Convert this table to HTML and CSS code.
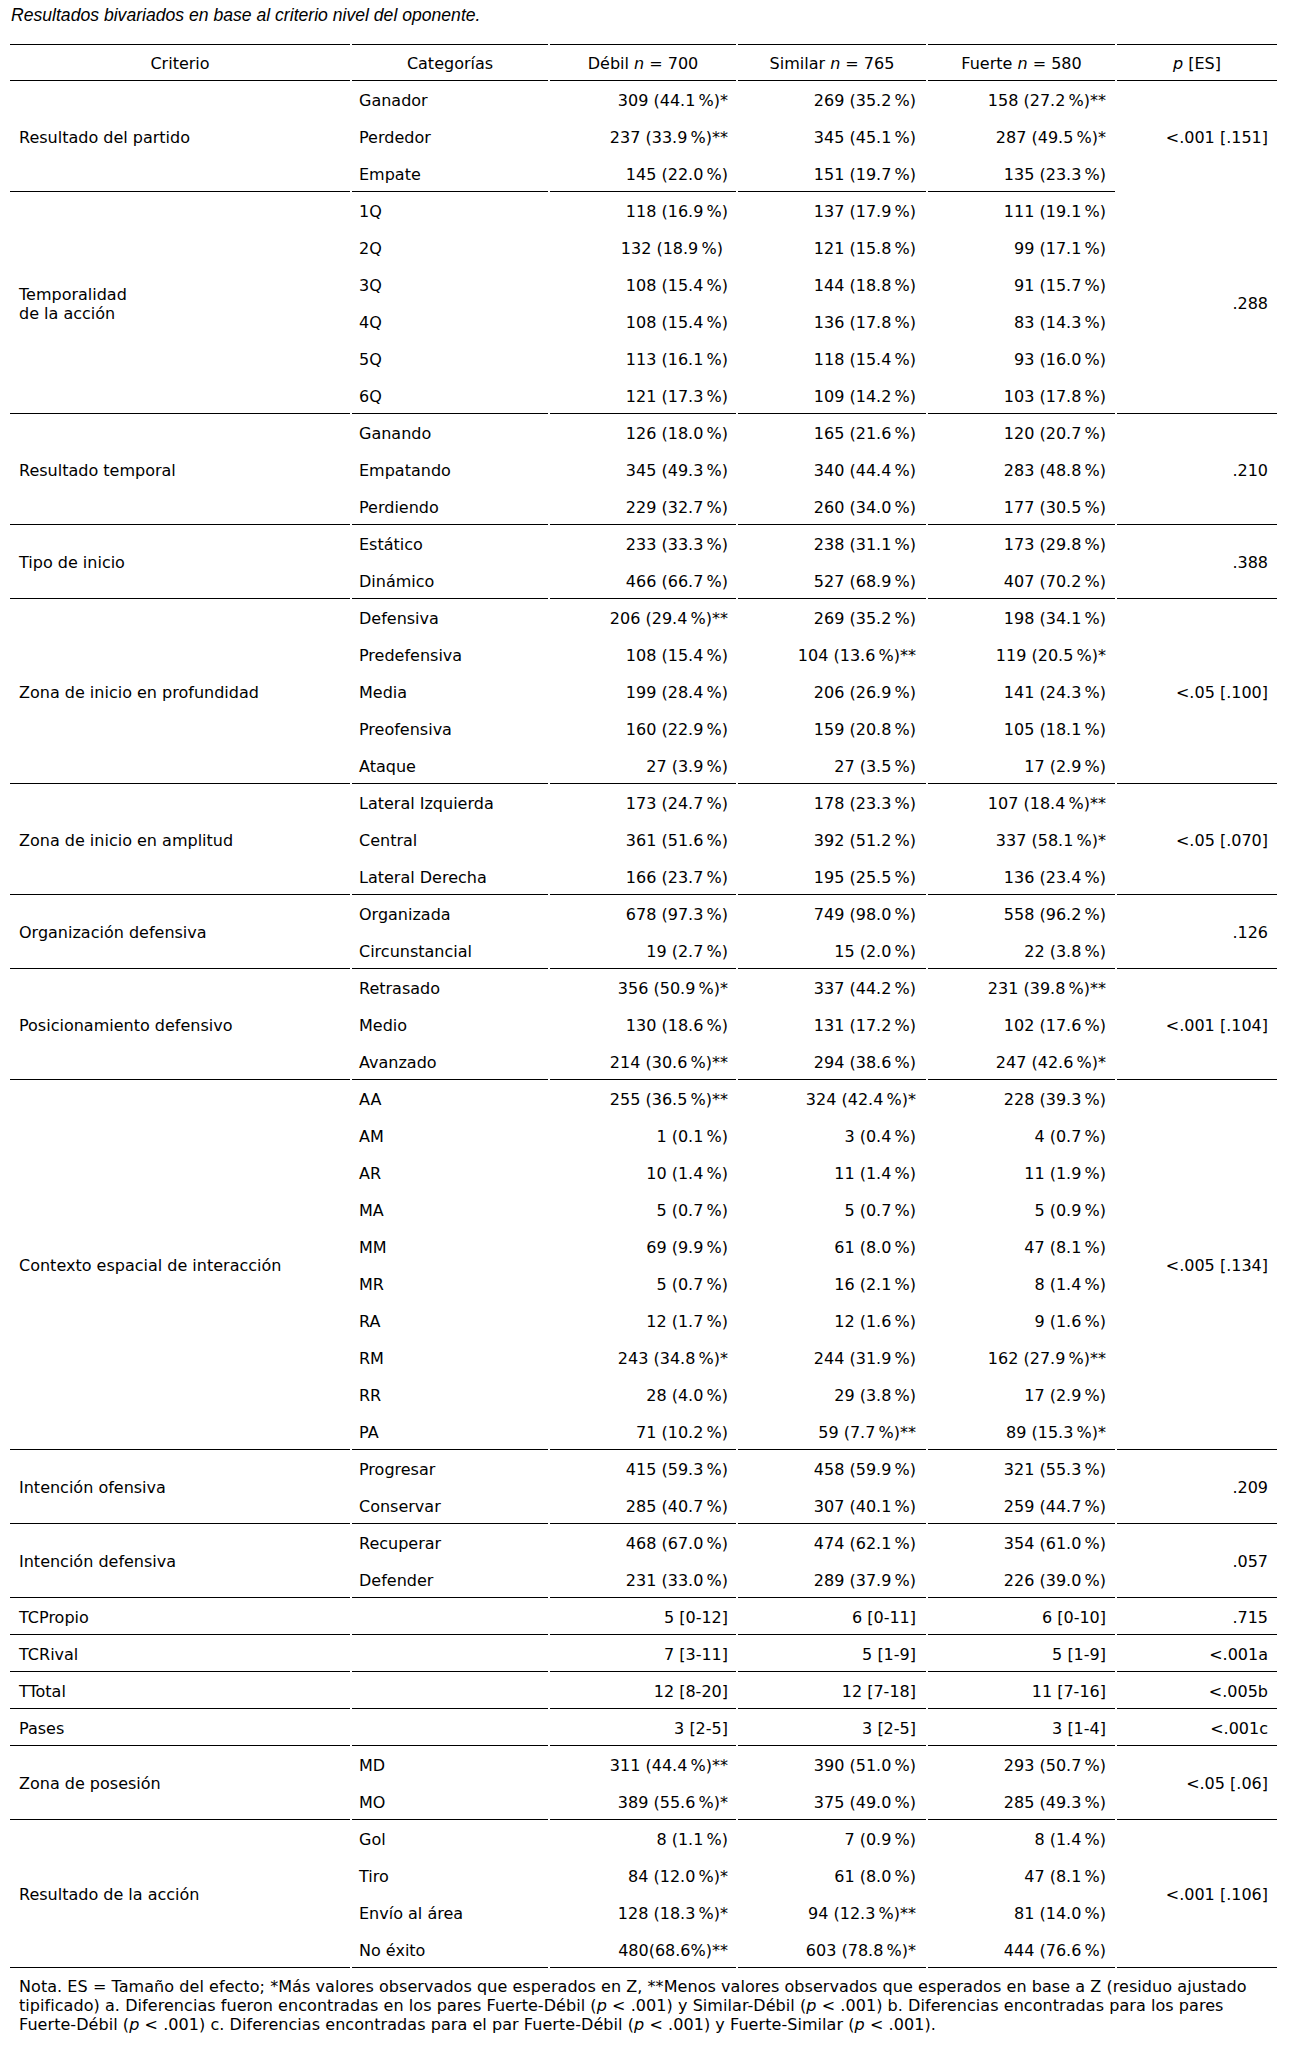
FILE: index.html
```html
<!DOCTYPE html>
<html lang="es">
<head>
<meta charset="utf-8">
<title>Resultados bivariados</title>
<link rel="stylesheet" href="styles.css">
</head>
<body>
<p class="caption">Resultados bivariados en base al criterio nivel del oponente.</p>
<table class="tbl">
<colgroup>
<col class="c1"><col class="c2"><col class="c3"><col class="c4"><col class="c5"><col class="c6">
</colgroup>
<thead>
<tr><th>Criterio</th><th>Categorías</th><th>Débil <i>n</i> = 700</th><th>Similar <i>n</i> = 765</th><th>Fuerte <i>n</i> = 580</th><th><i>p</i> [ES]</th></tr>
</thead>
<tbody>
<tr><td class="crit b" rowspan="3">Resultado del partido</td><td class="cat">Ganador</td><td class="num">309 (44.1&thinsp;%)*</td><td class="num n4">269 (35.2&thinsp;%)</td><td class="num n5">158 (27.2&thinsp;%)**</td><td class="pv" rowspan="3">&lt;.001 [.151]</td></tr>
<tr><td class="cat">Perdedor</td><td class="num">237 (33.9&thinsp;%)**</td><td class="num n4">345 (45.1&thinsp;%)</td><td class="num n5">287 (49.5&thinsp;%)*</td></tr>
<tr class="last"><td class="cat">Empate</td><td class="num">145 (22.0&thinsp;%)</td><td class="num n4">151 (19.7&thinsp;%)</td><td class="num n5">135 (23.3&thinsp;%)</td></tr>

<tr><td class="crit b" rowspan="6">Temporalidad<br>de la acción</td><td class="cat">1Q</td><td class="num">118 (16.9&thinsp;%)</td><td class="num n4">137 (17.9&thinsp;%)</td><td class="num n5">111 (19.1&thinsp;%)</td><td class="pv b" rowspan="6">.288</td></tr>
<tr><td class="cat">2Q</td><td class="num">132 (18.9&thinsp;%)&nbsp;</td><td class="num n4">121 (15.8&thinsp;%)</td><td class="num n5">99 (17.1&thinsp;%)</td></tr>
<tr><td class="cat">3Q</td><td class="num">108 (15.4&thinsp;%)</td><td class="num n4">144 (18.8&thinsp;%)</td><td class="num n5">91 (15.7&thinsp;%)</td></tr>
<tr><td class="cat">4Q</td><td class="num">108 (15.4&thinsp;%)</td><td class="num n4">136 (17.8&thinsp;%)</td><td class="num n5">83 (14.3&thinsp;%)</td></tr>
<tr><td class="cat">5Q</td><td class="num">113 (16.1&thinsp;%)</td><td class="num n4">118 (15.4&thinsp;%)</td><td class="num n5">93 (16.0&thinsp;%)</td></tr>
<tr class="last"><td class="cat">6Q</td><td class="num">121 (17.3&thinsp;%)</td><td class="num n4">109 (14.2&thinsp;%)</td><td class="num n5">103 (17.8&thinsp;%)</td></tr>

<tr><td class="crit b" rowspan="3">Resultado temporal</td><td class="cat">Ganando</td><td class="num">126 (18.0&thinsp;%)</td><td class="num n4">165 (21.6&thinsp;%)</td><td class="num n5">120 (20.7&thinsp;%)</td><td class="pv b" rowspan="3">.210</td></tr>
<tr><td class="cat">Empatando</td><td class="num">345 (49.3&thinsp;%)</td><td class="num n4">340 (44.4&thinsp;%)</td><td class="num n5">283 (48.8&thinsp;%)</td></tr>
<tr class="last"><td class="cat">Perdiendo</td><td class="num">229 (32.7&thinsp;%)</td><td class="num n4">260 (34.0&thinsp;%)</td><td class="num n5">177 (30.5&thinsp;%)</td></tr>

<tr><td class="crit b" rowspan="2">Tipo de inicio</td><td class="cat">Estático</td><td class="num">233 (33.3&thinsp;%)</td><td class="num n4">238 (31.1&thinsp;%)</td><td class="num n5">173 (29.8&thinsp;%)</td><td class="pv b" rowspan="2">.388</td></tr>
<tr class="last"><td class="cat">Dinámico</td><td class="num">466 (66.7&thinsp;%)</td><td class="num n4">527 (68.9&thinsp;%)</td><td class="num n5">407 (70.2&thinsp;%)</td></tr>

<tr><td class="crit b" rowspan="5">Zona de inicio en profundidad</td><td class="cat">Defensiva</td><td class="num">206 (29.4&thinsp;%)**</td><td class="num n4">269 (35.2&thinsp;%)</td><td class="num n5">198 (34.1&thinsp;%)</td><td class="pv b" rowspan="5">&lt;.05 [.100]</td></tr>
<tr><td class="cat">Predefensiva</td><td class="num">108 (15.4&thinsp;%)</td><td class="num n4">104 (13.6&thinsp;%)**</td><td class="num n5">119 (20.5&thinsp;%)*</td></tr>
<tr><td class="cat">Media</td><td class="num">199 (28.4&thinsp;%)</td><td class="num n4">206 (26.9&thinsp;%)</td><td class="num n5">141 (24.3&thinsp;%)</td></tr>
<tr><td class="cat">Preofensiva</td><td class="num">160 (22.9&thinsp;%)</td><td class="num n4">159 (20.8&thinsp;%)</td><td class="num n5">105 (18.1&thinsp;%)</td></tr>
<tr class="last"><td class="cat">Ataque</td><td class="num">27 (3.9&thinsp;%)</td><td class="num n4">27 (3.5&thinsp;%)</td><td class="num n5">17 (2.9&thinsp;%)</td></tr>

<tr><td class="crit b" rowspan="3">Zona de inicio en amplitud</td><td class="cat">Lateral Izquierda</td><td class="num">173 (24.7&thinsp;%)</td><td class="num n4">178 (23.3&thinsp;%)</td><td class="num n5">107 (18.4&thinsp;%)**</td><td class="pv b" rowspan="3">&lt;.05 [.070]</td></tr>
<tr><td class="cat">Central</td><td class="num">361 (51.6&thinsp;%)</td><td class="num n4">392 (51.2&thinsp;%)</td><td class="num n5">337 (58.1&thinsp;%)*</td></tr>
<tr class="last"><td class="cat">Lateral Derecha</td><td class="num">166 (23.7&thinsp;%)</td><td class="num n4">195 (25.5&thinsp;%)</td><td class="num n5">136 (23.4&thinsp;%)</td></tr>

<tr><td class="crit b" rowspan="2">Organización defensiva</td><td class="cat">Organizada</td><td class="num">678 (97.3&thinsp;%)</td><td class="num n4">749 (98.0&thinsp;%)</td><td class="num n5">558 (96.2&thinsp;%)</td><td class="pv b" rowspan="2">.126</td></tr>
<tr class="last"><td class="cat">Circunstancial</td><td class="num">19 (2.7&thinsp;%)</td><td class="num n4">15 (2.0&thinsp;%)</td><td class="num n5">22 (3.8&thinsp;%)</td></tr>

<tr><td class="crit b" rowspan="3">Posicionamiento defensivo</td><td class="cat">Retrasado</td><td class="num">356 (50.9&thinsp;%)*</td><td class="num n4">337 (44.2&thinsp;%)</td><td class="num n5">231 (39.8&thinsp;%)**</td><td class="pv b" rowspan="3">&lt;.001 [.104]</td></tr>
<tr><td class="cat">Medio</td><td class="num">130 (18.6&thinsp;%)</td><td class="num n4">131 (17.2&thinsp;%)</td><td class="num n5">102 (17.6&thinsp;%)</td></tr>
<tr class="last"><td class="cat">Avanzado</td><td class="num">214 (30.6&thinsp;%)**</td><td class="num n4">294 (38.6&thinsp;%)</td><td class="num n5">247 (42.6&thinsp;%)*</td></tr>

<tr><td class="crit b" rowspan="10">Contexto espacial de interacción</td><td class="cat">AA</td><td class="num">255 (36.5&thinsp;%)**</td><td class="num n4">324 (42.4&thinsp;%)*</td><td class="num n5">228 (39.3&thinsp;%)</td><td class="pv b" rowspan="10">&lt;.005 [.134]</td></tr>
<tr><td class="cat">AM</td><td class="num">1 (0.1&thinsp;%)</td><td class="num n4">3 (0.4&thinsp;%)</td><td class="num n5">4 (0.7&thinsp;%)</td></tr>
<tr><td class="cat">AR</td><td class="num">10 (1.4&thinsp;%)</td><td class="num n4">11 (1.4&thinsp;%)</td><td class="num n5">11 (1.9&thinsp;%)</td></tr>
<tr><td class="cat">MA</td><td class="num">5 (0.7&thinsp;%)</td><td class="num n4">5 (0.7&thinsp;%)</td><td class="num n5">5 (0.9&thinsp;%)</td></tr>
<tr><td class="cat">MM</td><td class="num">69 (9.9&thinsp;%)</td><td class="num n4">61 (8.0&thinsp;%)</td><td class="num n5">47 (8.1&thinsp;%)</td></tr>
<tr><td class="cat">MR</td><td class="num">5 (0.7&thinsp;%)</td><td class="num n4">16 (2.1&thinsp;%)</td><td class="num n5">8 (1.4&thinsp;%)</td></tr>
<tr><td class="cat">RA</td><td class="num">12 (1.7&thinsp;%)</td><td class="num n4">12 (1.6&thinsp;%)</td><td class="num n5">9 (1.6&thinsp;%)</td></tr>
<tr><td class="cat">RM</td><td class="num">243 (34.8&thinsp;%)*</td><td class="num n4">244 (31.9&thinsp;%)</td><td class="num n5">162 (27.9&thinsp;%)**</td></tr>
<tr><td class="cat">RR</td><td class="num">28 (4.0&thinsp;%)</td><td class="num n4">29 (3.8&thinsp;%)</td><td class="num n5">17 (2.9&thinsp;%)</td></tr>
<tr class="last"><td class="cat">PA</td><td class="num">71 (10.2&thinsp;%)</td><td class="num n4">59 (7.7&thinsp;%)**</td><td class="num n5">89 (15.3&thinsp;%)*</td></tr>

<tr><td class="crit b" rowspan="2">Intención ofensiva</td><td class="cat">Progresar</td><td class="num">415 (59.3&thinsp;%)</td><td class="num n4">458 (59.9&thinsp;%)</td><td class="num n5">321 (55.3&thinsp;%)</td><td class="pv b" rowspan="2">.209</td></tr>
<tr class="last"><td class="cat">Conservar</td><td class="num">285 (40.7&thinsp;%)</td><td class="num n4">307 (40.1&thinsp;%)</td><td class="num n5">259 (44.7&thinsp;%)</td></tr>

<tr><td class="crit b" rowspan="2">Intención defensiva</td><td class="cat">Recuperar</td><td class="num">468 (67.0&thinsp;%)</td><td class="num n4">474 (62.1&thinsp;%)</td><td class="num n5">354 (61.0&thinsp;%)</td><td class="pv b" rowspan="2">.057</td></tr>
<tr class="last"><td class="cat">Defender</td><td class="num">231 (33.0&thinsp;%)</td><td class="num n4">289 (37.9&thinsp;%)</td><td class="num n5">226 (39.0&thinsp;%)</td></tr>

<tr class="last"><td class="crit b">TCPropio</td><td class="cat"></td><td class="num">5 [0-12]</td><td class="num n4">6 [0-11]</td><td class="num n5">6 [0-10]</td><td class="pv b">.715</td></tr>
<tr class="last"><td class="crit b">TCRival</td><td class="cat"></td><td class="num">7 [3-11]</td><td class="num n4">5 [1-9]</td><td class="num n5">5 [1-9]</td><td class="pv b">&lt;.001a</td></tr>
<tr class="last"><td class="crit b">TTotal</td><td class="cat"></td><td class="num">12 [8-20]</td><td class="num n4">12 [7-18]</td><td class="num n5">11 [7-16]</td><td class="pv b">&lt;.005b</td></tr>
<tr class="last"><td class="crit b">Pases</td><td class="cat"></td><td class="num">3 [2-5]</td><td class="num n4">3 [2-5]</td><td class="num n5">3 [1-4]</td><td class="pv b">&lt;.001c</td></tr>

<tr><td class="crit b" rowspan="2">Zona de posesión</td><td class="cat">MD</td><td class="num">311 (44.4&thinsp;%)**</td><td class="num n4">390 (51.0&thinsp;%)</td><td class="num n5">293 (50.7&thinsp;%)</td><td class="pv b" rowspan="2">&lt;.05 [.06]</td></tr>
<tr class="last"><td class="cat">MO</td><td class="num">389 (55.6&thinsp;%)*</td><td class="num n4">375 (49.0&thinsp;%)</td><td class="num n5">285 (49.3&thinsp;%)</td></tr>

<tr><td class="crit b" rowspan="4">Resultado de la acción</td><td class="cat">Gol</td><td class="num">8 (1.1&thinsp;%)</td><td class="num n4">7 (0.9&thinsp;%)</td><td class="num n5">8 (1.4&thinsp;%)</td><td class="pv b" rowspan="4">&lt;.001 [.106]</td></tr>
<tr><td class="cat">Tiro</td><td class="num">84 (12.0&thinsp;%)*</td><td class="num n4">61 (8.0&thinsp;%)</td><td class="num n5">47 (8.1&thinsp;%)</td></tr>
<tr><td class="cat">Envío al área</td><td class="num">128 (18.3&thinsp;%)*</td><td class="num n4">94 (12.3&thinsp;%)**</td><td class="num n5">81 (14.0&thinsp;%)</td></tr>
<tr class="last"><td class="cat">No éxito</td><td class="num">480(68.6%)**</td><td class="num n4">603 (78.8&thinsp;%)*</td><td class="num n5">444 (76.6&thinsp;%)</td></tr>
</tbody>
</table>
<p class="note">Nota. ES = Tamaño del efecto; *Más valores observados que esperados en Z, **Menos valores observados que esperados en base a Z (residuo ajustado<br>tipificado) a. Diferencias fueron encontradas en los pares Fuerte-Débil (<i>p</i> &lt; .001) y Similar-Débil (<i>p</i> &lt; .001) b. Diferencias encontradas para los pares<br>Fuerte-Débil (<i>p</i> &lt; .001) c. Diferencias encontradas para el par Fuerte-Débil (<i>p</i> &lt; .001) y Fuerte-Similar (<i>p</i> &lt; .001).</p>
</body>
</html>
```

FILE: styles.css
```css
html, body {
  margin: 0;
  padding: 0;
  background: #fff;
}

body {
  font-family: "DejaVu Sans", Verdana, sans-serif;
  font-size: 16px;
  color: #000;
}

.caption {
  margin: 0;
  padding: 5px 0 0 11px;
  font-family: "Liberation Sans", Arial, sans-serif;
  font-style: italic;
  font-size: 17.6px;
  line-height: 20px;
  color: #000;
}

.tbl {
  margin: 19px 0 0 8px;
  border-collapse: separate;
  border-spacing: 2px 0;
  table-layout: fixed;
  width: 1271px;
}

.c1 { width: 340px; }
.c2 { width: 196px; }
.c3 { width: 186px; }
.c4 { width: 188px; }
.c5 { width: 187px; }
.c6 { width: 160px; }

.tbl tr {
  height: 37px;
}

.tbl th {
  font-weight: normal;
  text-align: center;
  vertical-align: middle;
  padding: 2px 4px 0;
  border-top: 1px solid #000;
  border-bottom: 1px solid #000;
  white-space: nowrap;
}

.tbl td {
  vertical-align: middle;
  white-space: nowrap;
  padding: 2px 8px 0;
  line-height: 19px;
}

.tbl .crit {
  text-align: left;
  padding-left: 9px;
}

.tbl .cat {
  text-align: left;
  padding-left: 7px;
}

.tbl .num {
  text-align: right;
  padding-right: 8px;
}

.tbl .num.n4 {
  padding-right: 10px;
}

.tbl .num.n5 {
  padding-right: 9px;
}

.tbl .pv {
  text-align: right;
  padding-right: 9px;
}

.tbl .b,
.tbl tr.last td {
  border-bottom: 1px solid #000;
}

.note {
  margin: 9px 0 0 0;
  padding: 0 0 0 19px;
  line-height: 19px;
  letter-spacing: 0.06px;
  white-space: nowrap;
}
```
